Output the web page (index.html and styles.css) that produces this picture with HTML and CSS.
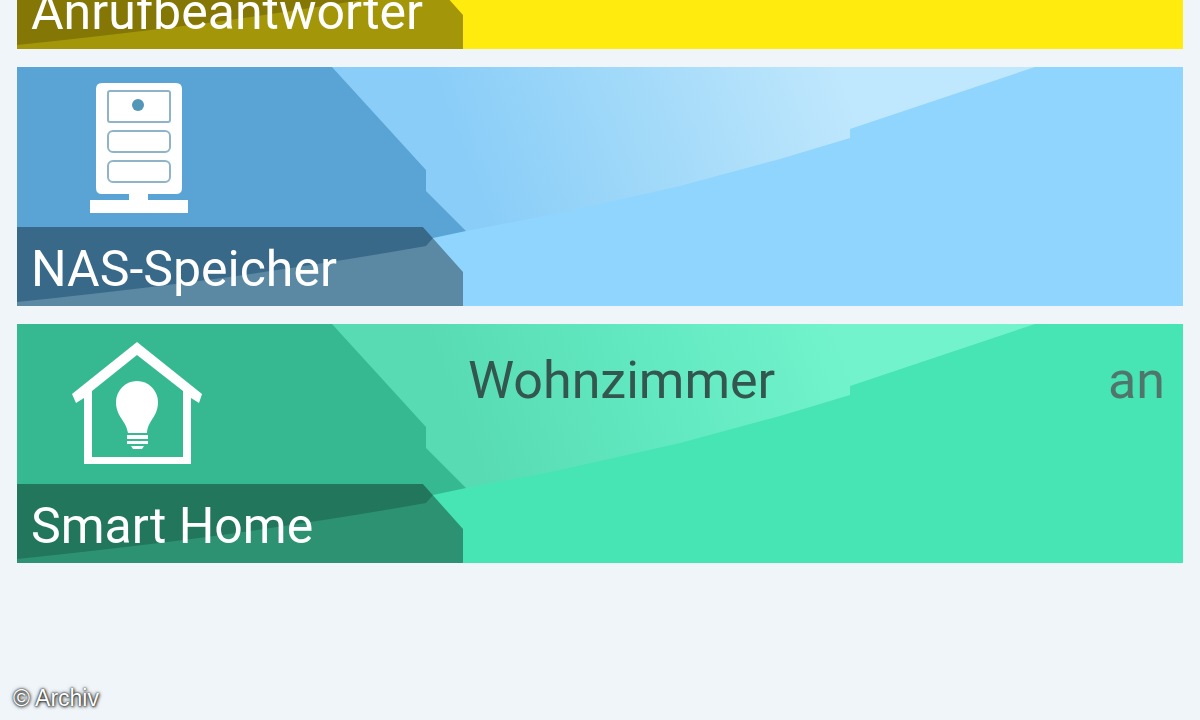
FILE: index.html
```
<!DOCTYPE html>
<html lang="de">

<head>
    <meta charset="utf-8">
    <meta content="width=device-width, initial-scale=1.0" name="viewport">

    <title>Heimnetz</title>

    <link rel="stylesheet" href="styles.css">
</head>

<body>

    <main>
        <!-- List is scrolled down, first tile is cut off at the top -->
        <div class="tiles">
            <a class="tile yellow" href="#anrufbeantworter">
                <svg class="art" viewBox="0 0 1166 239" preserveAspectRatio="none" aria-hidden="true">
                    <path class="dark" d="M0 0H315L409 103V124L449 164L416 171L409 179Q330 193 240 206T0 235Z" />
                </svg>
                <div class="side">
                    <h2 class="label">Anrufbeantworter</h2>
                </div>
            </a>

            <a class="tile blue" href="#nas">
                <svg class="art" viewBox="0 0 1166 239" preserveAspectRatio="none" aria-hidden="true">
                    <defs>
                        <linearGradient id="shineBlue" gradientUnits="userSpaceOnUse" x1="460" y1="140" x2="820" y2="0">
                            <stop offset="0" stop-color="#89cdf8" />
                            <stop offset="0.5" stop-color="#a3daf9" />
                            <stop offset="1" stop-color="#bfe7fd" />
                        </linearGradient>
                    </defs>
                    <path fill="url(#shineBlue)" d="M315 0H1018L833 62V71L763 92L663 119L543 146L449 164L409 124V103Z" />
                    <path class="dark" d="M0 0H315L409 103V124L449 164L416 171L409 179Q330 193 240 206T0 235Z" />
                </svg>
                <div class="side">
                    <svg class="icon" viewBox="0 0 130 130" aria-hidden="true">
                        <path fill="#fff" d="M30 0H104Q110 0 110 6V105Q110 111 104 111H76V117H116V130H18V117H57V111H30Q24 111 24 105V6Q24 0 30 0Z" />
                        <g fill="none" stroke="#8fb4c8" stroke-width="2">
                            <rect x="36" y="8" width="62" height="31" rx="2" />
                            <rect x="36" y="48" width="62" height="21" rx="5" />
                            <rect x="36" y="78" width="62" height="21" rx="5" />
                        </g>
                        <circle cx="66" cy="22" r="6" fill="#5396b8" />
                    </svg>
                    <h2 class="label">NAS-Speicher</h2>
                </div>
            </a>

            <a class="tile green" href="#smarthome">
                <svg class="art" viewBox="0 0 1166 239" preserveAspectRatio="none" aria-hidden="true">
                    <defs>
                        <linearGradient id="shineGreen" gradientUnits="userSpaceOnUse" x1="460" y1="140" x2="820" y2="0">
                            <stop offset="0" stop-color="#58dbb2" />
                            <stop offset="0.5" stop-color="#62e9c1" />
                            <stop offset="1" stop-color="#72f3cc" />
                        </linearGradient>
                    </defs>
                    <path fill="url(#shineGreen)" d="M315 0H1018L833 62V71L763 92L663 119L543 146L449 164L409 124V103Z" />
                    <path class="dark" d="M0 0H315L409 103V124L449 164L416 171L409 179Q330 193 240 206T0 235Z" />
                </svg>
                <div class="side">
                    <svg class="icon" viewBox="0 0 130 130" aria-hidden="true">
                        <g fill="#fff">
                            <path fill-rule="evenodd" d="M65 2L130 54L127 63L119 58V124H12V58L4 63L0 54ZM65 15L20 51V117H111V51Z" />
                            <path d="M65 41A21 21 0 0 1 86 62C86 77 76 80 75 93H56C54 80 44 77 44 62A21 21 0 0 1 65 41Z" />
                            <path d="M55 95H76V99H55ZM55 101H76V104H55ZM59 106H72L70 109H61Z" />
                        </g>
                    </svg>
                    <h2 class="label">Smart Home</h2>
                </div>
                <div class="status">
                    <span class="room">Wohnzimmer</span>
                    <span class="state">an</span>
                </div>
            </a>
        </div>
    </main>

    <footer>© Archiv</footer>

</body>

</html>
```
FILE: styles.css
```
* {
    box-sizing: border-box;
}

body {
    display: flex;
    flex-direction: column;
    height: 100vh;
    margin: 0;
    overflow: hidden;
    background-color: #eff5f8;
    font-family: Roboto, Arial, sans-serif;
}

main {
    flex: 1;
    padding: 0 17px;
}

.tiles {
    display: flex;
    flex-direction: column;
    gap: 18px;
    margin-top: -190px;
}

.tile {
    position: relative;
    display: grid;
    grid-template-columns: 446fr 720fr;
    height: 239px;
    color: inherit;
    text-decoration: none;
}

.art {
    position: absolute;
    top: 0;
    left: 0;
    width: 100%;
    height: 100%;
}

.yellow {
    background-color: #ffeb0e;
}

.yellow .dark {
    fill: #cfbb08;
}

.blue {
    background-color: #8fd5fd;
}

.blue .dark {
    fill: #5aa4d5;
}

.green {
    background-color: #46e5b3;
}

.green .dark {
    fill: #36b990;
}

.side {
    position: relative;
    display: flex;
    flex-direction: column;
    justify-content: space-between;
    padding-top: 16px;
}

.icon {
    width: 130px;
    height: 130px;
    margin-left: 55px;
}

.label {
    margin: auto 0 0;
    padding-left: 14px;
    height: 79px;
    background-color: rgba(0, 0, 0, 0.36);
    clip-path: polygon(0 0, 91% 0, 100% 57%, 100% 100%, 0 100%);
    color: #fff;
    font-size: 50px;
    font-weight: normal;
    line-height: 84px;
}

.status {
    position: relative;
    display: flex;
    justify-content: space-between;
    padding: 29px 18px 0 5px;
    font-size: 52px;
    line-height: 56px;
}

.room {
    color: #33564e;
}

.state {
    color: #50766b;
}

footer {
    padding: 8px 13px;
    color: #fff;
    font-family: "Liberation Sans", Arial, sans-serif;
    font-size: 23px;
    line-height: 28px;
    text-shadow: 0 0 2px #000, 0 0 4px rgba(0, 0, 0, 0.6), 1px 1px 3px rgba(0, 0, 0, 0.6);
}
```
